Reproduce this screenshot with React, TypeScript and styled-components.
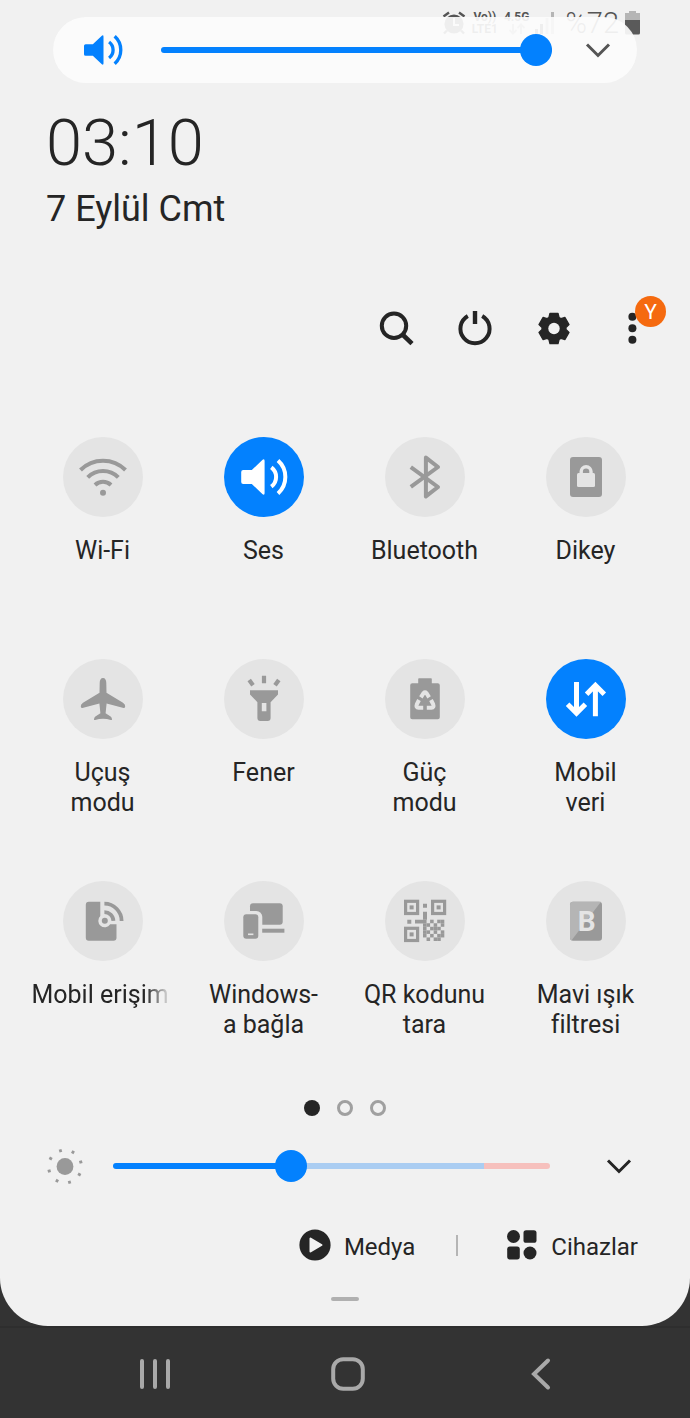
import React, { useState } from 'react';
import styled, { createGlobalStyle, css } from 'styled-components';

const color = {
  panel: '#f1f1f1',
  ink: '#252525',
  blue: '#0381fe',
  disc: '#e4e4e4',
  glyph: '#999999',
  shell: '#333333',
  nav: '#a9a9a9',
};

const GlobalStyle = createGlobalStyle`
  *, *::before, *::after { box-sizing: border-box; }
  html, body { margin: 0; background: ${color.shell}; }
  body { font-family: Roboto, 'Liberation Sans', sans-serif; color: ${color.ink}; }
  button {
    font: inherit;
    color: inherit;
    background: none;
    border: 0;
    padding: 0;
    cursor: pointer;
  }
  svg { display: block; }
`;

const Screen = styled.div`
  min-height: 100vh;
  display: flex;
  flex-direction: column;
`;

const Panel = styled.main`
  position: relative;
  flex: 1;
  display: flex;
  flex-direction: column;
  padding-bottom: 25px;
  background: ${color.panel};
  border-radius: 0 0 48px 48px;
`;

/* ---------- status bar ---------- */

const StatusBar = styled.div`
  display: flex;
  justify-content: flex-end;
  align-items: center;
  gap: 6px;
  height: 46px;
  padding-right: 50px;
  color: #555555;
`;

const StatusStack = styled.div`
  display: flex;
  flex-direction: column;
  align-items: center;
  font-size: 12px;
  font-weight: 700;
  line-height: 12px;
`;

const BatteryLevel = styled.span`
  font-size: 29px;
  font-weight: 300;
  line-height: 32px;
  margin-left: 4px;
`;

/* ---------- volume pop-up ---------- */

const VolumePopup = styled.section`
  position: absolute;
  top: 17px;
  left: 53px;
  right: 53px;
  height: 66px;
  display: flex;
  align-items: center;
  padding: 0 19px 0 30px;
  border-radius: 33px;
  background: rgba(252, 252, 252, 0.92);
`;

const VolumeIcon = styled.div`
  color: ${color.blue};
  margin-right: 38px;
`;

const Range = styled.input<{ $track: string }>`
  appearance: none;
  flex: 1;
  min-width: 0;
  height: 32px;
  margin: 0;
  background: transparent;
  cursor: pointer;

  &::-webkit-slider-runnable-track {
    height: 6px;
    border-radius: 3px;
    background: ${(p) => p.$track};
  }
  &::-webkit-slider-thumb {
    appearance: none;
    width: 32px;
    height: 32px;
    margin-top: -13px;
    border-radius: 50%;
    background: ${color.blue};
  }
`;

const IconButton = styled.button<{ $before?: number; $tone?: string }>`
  position: relative;
  width: 40px;
  height: 40px;
  flex: none;
  display: grid;
  place-items: center;
  margin-left: ${(p) => p.$before ?? 0}px;
  color: ${(p) => p.$tone ?? color.ink};
`;

/* ---------- header ---------- */

const Clock = styled.time`
  margin: 61px 0 0 46px;
  font-size: 65px;
  font-weight: 300;
  line-height: 72px;
`;

const DateLine = styled.div`
  margin: 8px 0 0 46px;
  font-size: 36px;
  line-height: 44px;
`;

const Toolbar = styled.div`
  display: flex;
  justify-content: flex-end;
  gap: 39px;
  margin-top: 77px;
  padding-right: 37px;
`;

const Badge = styled.span`
  position: absolute;
  top: -12px;
  right: -13px;
  width: 31px;
  height: 31px;
  border-radius: 50%;
  background: #f56a0f;
  color: #ffffff;
  font-size: 21px;
  line-height: 32px;
  text-align: center;
`;

/* ---------- tiles ---------- */

const TileGrid = styled.div`
  display: grid;
  grid-template-columns: repeat(4, 1fr);
  row-gap: 63px;
  margin-top: 89px;
  padding: 0 24px 0 22px;
`;

const Tile = styled.button`
  display: flex;
  flex-direction: column;
  align-items: center;
  gap: 19px;
  min-width: 0;
`;

const Disc = styled.span<{ $on?: boolean }>`
  width: 80px;
  height: 80px;
  display: grid;
  place-items: center;
  border-radius: 50%;
  background: ${(p) => (p.$on ? color.blue : color.disc)};
  color: ${(p) => (p.$on ? '#ffffff' : color.glyph)};
`;

const TileLabel = styled.span<{ $fade?: boolean }>`
  min-height: 60px;
  font-size: 25px;
  line-height: 30px;
  white-space: pre;
  ${(p) =>
    p.$fade &&
    css`
      width: 142px;
      overflow: hidden;
      text-align: left;
      mask-image: linear-gradient(to right, #000 80%, transparent 98%);
    `}
`;

/* ---------- lower controls ---------- */

const Pager = styled.div`
  display: flex;
  justify-content: center;
  gap: 17px;
  margin-top: 60px;
`;

const PageDot = styled.button<{ $current?: boolean }>`
  width: 16px;
  height: 16px;
  border-radius: 50%;
  ${(p) =>
    p.$current
      ? css`background: ${color.ink};`
      : css`border: 3px solid #a0a0a0;`}
`;

const BrightnessRow = styled.div`
  display: flex;
  align-items: center;
  height: 32px;
  margin-top: 34px;
  padding: 0 51px 0 45px;
`;

const BrightnessIcon = styled.div`
  color: ${color.glyph};
  margin-right: 28px;
`;

const Shortcuts = styled.div`
  display: flex;
  justify-content: flex-end;
  align-items: center;
  margin-top: 47px;
  padding-right: 52px;
`;

const Shortcut = styled.button`
  display: flex;
  align-items: center;
  gap: 13px;
  height: 32px;
  font-size: 24px;
  line-height: 28px;
`;

const ShortcutLabel = styled.span`
  padding-top: 3px;
`;

const Divider = styled.span`
  width: 2px;
  height: 21px;
  margin: 0 48px 0 41px;
  background: #b5b5b5;
`;

const Handle = styled.div`
  align-self: center;
  width: 28px;
  height: 4px;
  margin-top: 36px;
  border-radius: 2px;
  background: #b0b0b0;
`;

const NavBar = styled.nav`
  display: grid;
  grid-template-columns: repeat(3, 1fr);
  place-items: center;
  height: 92px;
  padding: 2px 52px 0 58px;
  border-top: 2px solid #2e2e2e;
`;

/* ---------- icons ---------- */

const Glyph = ({ size = 48, box = 48, children }: { size?: number; box?: number; children: React.ReactNode }) => (
  <svg width={size} height={size} viewBox={`0 0 ${box} ${box}`} fill="none" aria-hidden="true">
    {children}
  </svg>
);

const Speaker = ({ size }: { size?: number }) => (
  <Glyph size={size}>
    <path
      fill="currentColor"
      d="M3.2 17H11.8L22.6 6.8Q24.6 5.4 24.6 8V40Q24.6 42.6 22.6 41.2L11.8 31H3.2Q1.2 31 1.2 29V19Q1.2 17 3.2 17Z"
    />
    <path stroke="currentColor" strokeWidth="4" d="M31.3 14.4A12 12 0 0 1 31.3 33.6M38 7.6A22 22 0 0 1 38 40.4" />
  </Glyph>
);

const Wifi = () => (
  <Glyph>
    <circle cx="24" cy="39.7" r="3" fill="currentColor" />
    <path
      stroke="currentColor"
      strokeWidth="4"
      d="M1.5 17A31.8 31.8 0 0 1 46.5 17M8.7 24.3A21.7 21.7 0 0 1 39.3 24.3M16 32A11.6 11.6 0 0 1 32 32"
    />
  </Glyph>
);

const Bluetooth = () => (
  <Glyph>
    <path
      stroke="currentColor"
      strokeWidth="4"
      strokeLinejoin="round"
      d="M9.8 14.2L37 34L24.9 43.4V4.6L37 14L9.8 33.8"
    />
  </Glyph>
);

const RotationLock = () => (
  <Glyph>
    <rect x="8" y="4" width="32" height="40" rx="3" fill="currentColor" />
    <rect x="15" y="20" width="18" height="14" rx="1.5" fill={color.disc} />
    <path d="M19.2 21V18.6a4.9 4.9 0 0 1 9.8 0V21" stroke={color.disc} strokeWidth="3.4" />
  </Glyph>
);

const Airplane = () => (
  <Glyph>
    <path
      fill="currentColor"
      d="M24 3C26.2 3 27.3 5 27.3 8L27.5 17.8L44 27.8Q46.4 29.3 46.2 31.6Q46.1 33.4 44.6 33L27.6 28.4L26.6 38.2L31.6 41.6Q33 42.6 33 44.4Q33 45.3 31.8 45Q28 43.8 24 43.8Q20 43.8 16.2 45Q15 45.3 15 44.4Q15 42.6 16.4 41.6L21.4 38.2L20.4 28.4L3.4 33Q1.9 33.4 1.8 31.6Q1.6 29.3 4 27.8L20.5 17.8L20.7 8C20.7 5 21.8 3 24 3Z"
    />
  </Glyph>
);

const Torch = () => (
  <Glyph>
    <path
      fill="currentColor"
      fillRule="evenodd"
      d="M10 15.3H38V19.4L30.6 27.2V43Q30.6 46 27.6 46H20.4Q17.4 46 17.4 43V27.2L10 19.4ZM21.8 28V36.3H26.4V28Z"
    />
    <path stroke="currentColor" strokeWidth="4.2" d="M24 .7V8.3M9.2 5L13 10.3M38.8 5L35 10.3" />
  </Glyph>
);

const PowerMode = () => (
  <Glyph>
    <path
      fill="currentColor"
      d="M18 3.3H30Q30.8 3.3 30.8 4.1V8.3H36.7Q38.8 8.3 38.8 10.3V42.3Q38.8 44.3 36.7 44.3H11.3Q9.2 44.3 9.2 42.3V10.3Q9.2 8.3 11.3 8.3H17.2V4.1Q17.2 3.3 18 3.3Z"
    />
    <path
      stroke={color.disc}
      strokeWidth="4"
      d="M19.9 22.4L22.6 18Q24 16.4 25.4 18L28.1 22.4M18 25L15.8 29.4Q14.6 32.6 17.6 32.7H22.2M30 25L32.2 29.4Q33.4 32.6 30.4 32.7H25.8"
    />
  </Glyph>
);

const MobileData = () => (
  <Glyph>
    <path
      stroke="currentColor"
      strokeWidth="5"
      d="M14.5 7V38.2M5.6 29.2L14.5 38.1L23.4 29.2M33.4 41.3V10M24.6 19.2L33.4 10.3L42.3 19.2"
    />
  </Glyph>
);

const Hotspot = () => (
  <Glyph>
    <path
      fill="currentColor"
      d="M9.8 4.7H21.3V19A6.5 6.5 0 1 0 31.2 27.3H37.5V40.7Q37.5 43.7 34.5 43.7H9.8Q6.8 43.7 6.8 40.7V7.7Q6.8 4.7 9.8 4.7Z"
    />
    <circle cx="25.8" cy="23.7" r="3" fill="currentColor" />
    <path stroke="currentColor" strokeWidth="3.8" d="M25.4 15.1A9 9 0 0 1 34.4 23.9M25.4 6.7A17.2 17.2 0 0 1 42.6 23.9" />
  </Glyph>
);

const LinkToWindows = () => (
  <Glyph>
    <rect x="10" y="6.3" width="32.7" height="21.4" rx="3" fill="currentColor" />
    <rect x="-2" y="14" width="24.3" height="30" rx="6" fill={color.disc} />
    <rect x="3.3" y="17.3" width="15" height="24.4" rx="3" fill="currentColor" />
    <path stroke={color.disc} strokeWidth="1.6" d="M8 37.3H13.4" />
    <path stroke="currentColor" strokeWidth="4" d="M22.2 33.7H44.4" />
  </Glyph>
);

const qrRows = ['101011', '110101', '101110', '110101', '101011', '010110'];

const QrCode = () => (
  <Glyph>
    {[
      [3, 2.7],
      [30, 2.7],
      [3, 29.7],
    ].map(([x, y]) => (
      <g key={`${x}-${y}`}>
        <rect x={x + 1.6} y={y + 1.6} width="12" height="12.2" stroke="currentColor" strokeWidth="3.2" />
        <rect x={x + 5.6} y={y + 5.7} width="4" height="4" fill="currentColor" />
      </g>
    ))}
    <path fill="currentColor" d="M22 6.7h4v4h-4zM6.3 22.7h4v4h-4zM22 14.7h4v8h-4zM14 22.7h8v3.7h-8z" />
    {qrRows.flatMap((row, r) =>
      [...row].map((cell, c) =>
        cell === '1' ? (
          <rect key={`${r}-${c}`} x={22 + c * 3.55} y={22.7 + r * 3.55} width="3.55" height="3.55" fill="currentColor" />
        ) : null,
      ),
    )}
  </Glyph>
);

const BlueLight = () => (
  <Glyph>
    <rect x="8" y="4.7" width="32" height="39" rx="3" fill="currentColor" />
    <path fill="#b5b5b5" d="M11 4.7H39L9.6 43.2Q8 42.4 8 40.7V7.7Q8 4.7 11 4.7Z" />
    <text x="24.6" y="33.6" textAnchor="middle" fontFamily="Roboto, sans-serif" fontWeight="700" fontSize="28" fill={color.disc}>
      B
    </text>
  </Glyph>
);

const ChevronDown = () => (
  <Glyph size={40} box={40}>
    <path d="M9 14.5L20 25.5L31 14.5" stroke="currentColor" strokeWidth="3" />
  </Glyph>
);

const Sun = () => (
  <Glyph size={40} box={40}>
    <circle cx="20" cy="20.5" r="8.4" fill="currentColor" />
    {Array.from({ length: 8 }, (_, i) => (
      <rect
        key={i}
        x="18.6"
        y="2.6"
        width="2.8"
        height="3"
        fill="currentColor"
        transform={`rotate(${i * 45 - 16} 20 20.5)`}
      />
    ))}
  </Glyph>
);

const gearOutline = Array.from({ length: 6 }, (_, tooth) =>
  [
    [-25, 12],
    [-15, 15.5],
    [15, 15.5],
    [25, 12],
  ].map(([offset, radius]) => {
    const angle = ((tooth * 60 + offset - 90) * Math.PI) / 180;
    return `${(20 + radius * Math.cos(angle)).toFixed(2)} ${(20.5 + radius * Math.sin(angle)).toFixed(2)}`;
  }),
)
  .flat()
  .join('L');

const Gear = () => (
  <Glyph size={40} box={40}>
    <path d={`M${gearOutline}Z`} fill="currentColor" stroke="currentColor" strokeWidth="1.4" strokeLinejoin="round" />
    <circle cx="20" cy="20.5" r="5.7" fill={color.panel} />
  </Glyph>
);

const AlarmIcon = () => (
  <svg width="24" height="24" viewBox="0 0 24 24" fill="none" aria-hidden="true">
    <circle cx="12" cy="13" r="9.6" fill="currentColor" />
    <path d="M12 7V14H17" stroke="#f1f1f1" strokeWidth="2" />
    <path d="M1.5 5.5L7 1.5M22.5 5.5L17 1.5M5 19.5L2 22.5M19 19.5L22 22.5" stroke="currentColor" strokeWidth="2.4" />
  </svg>
);

const DataArrows = () => (
  <svg width="18" height="12" viewBox="0 0 18 12" fill="none" aria-hidden="true">
    <path d="M5 1V10M1.5 7L5 10.5L8.5 7M13 11V2M9.5 5L13 1.5L16.5 5" stroke="#aaaaaa" strokeWidth="2" />
  </svg>
);

const SignalIcon = () => (
  <svg width="20" height="22" viewBox="0 0 20 22" aria-hidden="true">
    <path d="M0 17h3v5H0zM5 12h3v10H5z" fill="currentColor" />
    <path d="M10.5 6h3v16h-3zM16 0h3v22h-3z" fill="#b5b5b5" />
  </svg>
);

const BatteryIcon = () => (
  <svg width="15" height="24" viewBox="0 0 15 24" aria-hidden="true">
    <path d="M4 0H11V2H15V9H0V2H4Z" fill="#b5b5b5" />
    <path d="M0 9H15V22Q15 23.5 13.5 23.5H1.5Q0 23.5 0 22Z" fill="#5a5a5a" />
  </svg>
);

const tiles = [
  { label: 'Wi-Fi', icon: <Wifi /> },
  { label: 'Ses', icon: <Speaker />, on: true },
  { label: 'Bluetooth', icon: <Bluetooth /> },
  { label: 'Dikey', icon: <RotationLock /> },
  { label: 'Uçuş\nmodu', icon: <Airplane /> },
  { label: 'Fener', icon: <Torch /> },
  { label: 'Güç\nmodu', icon: <PowerMode /> },
  { label: 'Mobil\nveri', icon: <MobileData />, on: true },
  { label: 'Mobil erişim', icon: <Hotspot />, fade: true },
  { label: 'Windows-\na bağla', icon: <LinkToWindows /> },
  { label: 'QR kodunu\ntara', icon: <QrCode /> },
  { label: 'Mavi ışık\nfiltresi', icon: <BlueLight /> },
];

export default function App() {
  const [volume, setVolume] = useState(100);
  const [brightness, setBrightness] = useState(40);

  return (
    <Screen lang="tr">
      <GlobalStyle />
      <Panel>
        <StatusBar>
          <AlarmIcon />
          <StatusStack>
            <span>Vo))</span>
            <span>LTE1</span>
          </StatusStack>
          <StatusStack>
            <span>4.5G</span>
            <DataArrows />
          </StatusStack>
          <SignalIcon />
          <BatteryLevel>%72</BatteryLevel>
          <BatteryIcon />
        </StatusBar>

        <VolumePopup>
          <VolumeIcon>
            <Speaker size={40} />
          </VolumeIcon>
          <Range
            type="range"
            aria-label="Ses düzeyi"
            value={volume}
            onChange={(e) => setVolume(Number(e.target.value))}
            $track={`linear-gradient(to right, ${color.blue} ${volume}%, #aacdf2 ${volume}%)`}
          />
          <IconButton aria-label="Genişlet" $before={26} $tone="#555555">
            <ChevronDown />
          </IconButton>
        </VolumePopup>

        <Clock>03:10</Clock>
        <DateLine>7 Eylül Cmt</DateLine>

        <Toolbar>
          <IconButton aria-label="Ara">
            <Glyph size={40} box={40}>
              <circle cx="18" cy="17.7" r="12.2" stroke="currentColor" strokeWidth="4" />
              <path d="M26.5 26.5L36 35.6" stroke="currentColor" strokeWidth="4.6" />
            </Glyph>
          </IconButton>
          <IconButton aria-label="Güç">
            <Glyph size={40} box={40}>
              <path d="M12.8 8A14.6 14.6 0 1 0 27.2 8" stroke="currentColor" strokeWidth="4" />
              <path d="M20 3V16" stroke="currentColor" strokeWidth="4.4" />
            </Glyph>
          </IconButton>
          <IconButton aria-label="Ayarlar">
            <Gear />
          </IconButton>
          <IconButton aria-label="Diğer seçenekler">
            <Glyph size={40} box={40}>
              <circle cx="19.4" cy="8.7" r="4" fill="currentColor" />
              <circle cx="19.4" cy="20.2" r="4" fill="currentColor" />
              <circle cx="19.4" cy="31.7" r="4" fill="currentColor" />
            </Glyph>
            <Badge>Y</Badge>
          </IconButton>
        </Toolbar>

        <TileGrid>
          {tiles.map((t) => (
            <Tile key={t.label} aria-pressed={!!t.on}>
              <Disc $on={t.on}>{t.icon}</Disc>
              <TileLabel $fade={t.fade}>{t.label}</TileLabel>
            </Tile>
          ))}
        </TileGrid>

        <Pager>
          <PageDot $current aria-label="Sayfa 1" />
          <PageDot aria-label="Sayfa 2" />
          <PageDot aria-label="Sayfa 3" />
        </Pager>

        <BrightnessRow>
          <BrightnessIcon>
            <Sun />
          </BrightnessIcon>
          <Range
            type="range"
            aria-label="Parlaklık"
            value={brightness}
            onChange={(e) => setBrightness(Number(e.target.value))}
            $track={`linear-gradient(to right, ${color.blue} ${brightness}%, #aacdf2 ${brightness}%, #aacdf2 85%, #f6c0bd 85%)`}
          />
          <IconButton aria-label="Parlaklık ayarları" $before={49}>
            <ChevronDown />
          </IconButton>
        </BrightnessRow>

        <Shortcuts>
          <Shortcut>
            <Glyph size={32} box={32}>
              <circle cx="16" cy="16" r="15.6" fill="currentColor" />
              <path
                d="M11.5 9.5V22.5L22.5 16Z"
                fill={color.panel}
                stroke={color.panel}
                strokeWidth="2"
                strokeLinejoin="round"
              />
            </Glyph>
            <ShortcutLabel>Medya</ShortcutLabel>
          </Shortcut>
          <Divider />
          <Shortcut>
            <Glyph size={32} box={32}>
              <circle cx="7.5" cy="7.5" r="6.5" fill="currentColor" />
              <rect x="17.5" y="1.2" width="13" height="12.6" rx="2.6" fill="currentColor" />
              <rect x="1.2" y="17.6" width="12.6" height="12.8" rx="2.6" fill="currentColor" />
              <circle cx="24" cy="24" r="6.5" fill="currentColor" />
            </Glyph>
            <ShortcutLabel>Cihazlar</ShortcutLabel>
          </Shortcut>
        </Shortcuts>

        <Handle />
      </Panel>

      <NavBar>
        <IconButton aria-label="Son uygulamalar" $tone={color.nav}>
          <Glyph size={40} box={40}>
            <path d="M7 7V33M20 7V33M33 7V33" stroke="currentColor" strokeWidth="4" strokeLinecap="round" />
          </Glyph>
        </IconButton>
        <IconButton aria-label="Ana ekran" $tone={color.nav}>
          <Glyph size={40} box={40}>
            <rect x="5.2" y="5.2" width="29.6" height="29.6" rx="10" stroke="currentColor" strokeWidth="4" />
          </Glyph>
        </IconButton>
        <IconButton aria-label="Geri" $tone={color.nav}>
          <Glyph size={40} box={40}>
            <path d="M27 6.5L13 20L27 33.5" stroke="currentColor" strokeWidth="4" strokeLinecap="round" />
          </Glyph>
        </IconButton>
      </NavBar>
    </Screen>
  );
}
